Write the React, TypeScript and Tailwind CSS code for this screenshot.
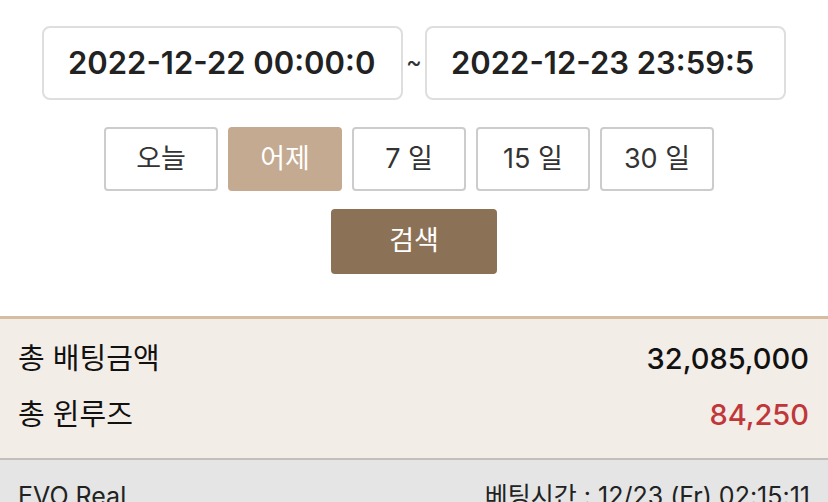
import React from "react";

const font = { fontFamily: "Inter, 'Noto Sans CJK KR', sans-serif" };

export default function App() {
  const ranges = ["오늘", "어제", "7 일", "15 일", "30 일"];
  return (
    <div className="w-[828px] h-[502px] overflow-hidden bg-white" style={font}>
      <div className="pt-[26px] flex items-center justify-center">
        <div className="w-[361px] h-[74px] rounded-[8px] border-2 border-[#dedede] pl-[24px] pr-[8px] flex items-center">
          <div className="whitespace-nowrap text-[31px] font-semibold text-[#222]">
            2022-12-22 00:00:0
          </div>
        </div>
        <div className="w-[22px] text-center text-[24px] leading-none text-[#333] pb-[2px]">~</div>
        <div className="w-[361px] h-[74px] rounded-[8px] border-2 border-[#dedede] pl-[24px] pr-[8px] flex items-center">
          <div className="whitespace-nowrap text-[31px] font-semibold text-[#222]">
            2022-12-23 23:59:5
          </div>
        </div>
      </div>
      <div className="mt-[27px] flex justify-center">
        {ranges.map((r, i) => (
          <div
            key={r}
            className={
              i === 1
                ? "w-[114px] h-[64px] mr-[10px] rounded-[4px] bg-[#c4aa91] text-white text-[27px] flex items-center justify-center"
                : "w-[114px] h-[64px] mr-[10px] rounded-[4px] border-2 border-[#cccccc] text-[#333] text-[27px] flex items-center justify-center"
            }
          >
            {r}
          </div>
        ))}
      </div>
      <div className="mt-[18px] flex justify-center">
        <div className="w-[166px] h-[65px] rounded-[4px] bg-[#8b7257] text-white text-[27px] flex items-center justify-center">
          검색
        </div>
      </div>
      <div className="mt-[42px] border-t-[3px] border-[#d6bda2] bg-[#f3ede8] px-[18px] pt-[20px] pb-[23px] border-b-2 border-b-[#c5bfbb]">
        <div className="flex justify-between items-center h-[40px] text-[29px]">
          <span className="text-[#111]">총 배팅금액</span>
          <span className="text-[#111] font-medium text-[29px] pr-[1px]">32,085,000</span>
        </div>
        <div className="flex justify-between items-center h-[40px] mt-[16px] text-[29px]">
          <span className="text-[#111]">총 윈루즈</span>
          <span className="text-[#c0373a] font-medium text-[29px] pr-[1px]">84,250</span>
        </div>
      </div>
      <div className="bg-[#e5e5e5] px-[18px] pt-[18px] h-[60px] flex justify-between text-[25px] text-[#222]">
        <span>EVO Real</span>
        <span>베팅시간 : 12/23 (Fr) 02:15:11</span>
      </div>
    </div>
  );
}
